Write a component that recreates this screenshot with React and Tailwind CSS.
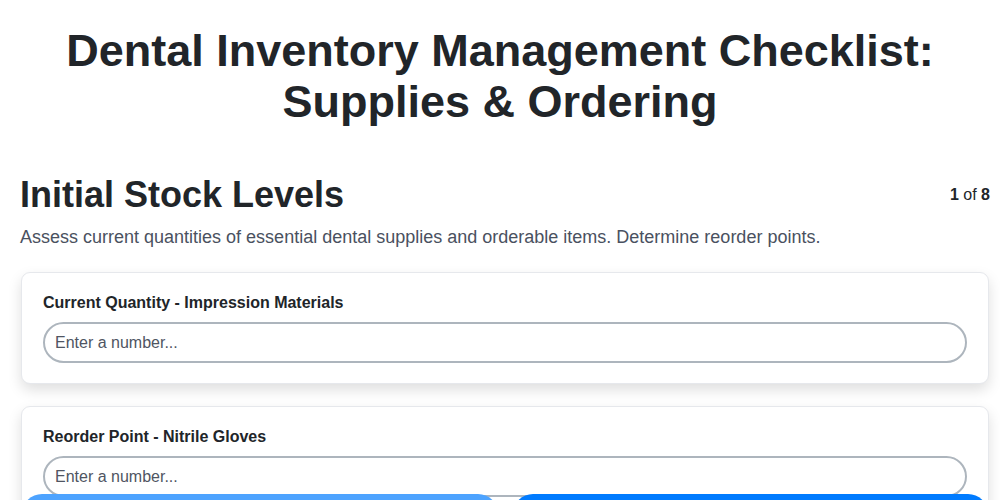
import React from 'react';

const fields = [
  { id: 'impression', label: 'Current Quantity - Impression Materials' },
  { id: 'gloves', label: 'Reorder Point - Nitrile Gloves' },
];

export default function App() {
  return (
    <div className="min-h-screen bg-white text-[#212529] font-['Liberation_Sans',Arial,sans-serif]">
      <h1 className="pt-[25px] px-[20px] text-center text-[45px] font-bold leading-[51px]">
        Dental Inventory Management Checklist:
        <br />
        Supplies &amp; Ordering
      </h1>

      <div className="pl-[20px] pr-[10px] pt-[46px]">
        <div className="flex items-start justify-between">
          <h2 className="text-[36px] font-bold leading-[44px]">Initial Stock Levels</h2>
          <div className="pt-[10px] text-[16px]">
            <span className="font-bold">1</span> of <span className="font-bold">8</span>
          </div>
        </div>
        <p className="mt-[7px] text-[18px] text-[#4a5160]">
          Assess current quantities of essential dental supplies and orderable items. Determine reorder points.
        </p>

        <div className="mt-[21px] flex flex-col gap-[22px] pb-[120px]">
          {fields.map((f) => (
            <div
              key={f.id}
              className="mx-[1px] rounded-[9px] border border-[#e6e8ec] bg-white px-[21px] pt-[20px] pb-[20px] shadow-[0_6px_14px_rgba(0,0,0,0.13)]"
            >
              <label className="block text-[16px] font-bold leading-[20px]">{f.label}</label>
              <input
                type="number"
                placeholder="Enter a number..."
                className="mt-[9px] block h-[41px] w-full rounded-full border-2 border-[#adb5bd] px-[10px] text-[16px] text-[#212529] outline-none placeholder:text-[#4f5562]"
              />
            </div>
          ))}
        </div>
      </div>

      <div className="fixed bottom-[-40px] left-0 right-0 flex gap-[15px] pl-[22px] pr-[12px]">
        <button className="h-[46px] flex-1 rounded-[20px] bg-[#4da3ff] text-white">Previous</button>
        <button className="h-[46px] flex-1 rounded-[20px] bg-[#007bff] text-white">Next</button>
      </div>
    </div>
  );
}
